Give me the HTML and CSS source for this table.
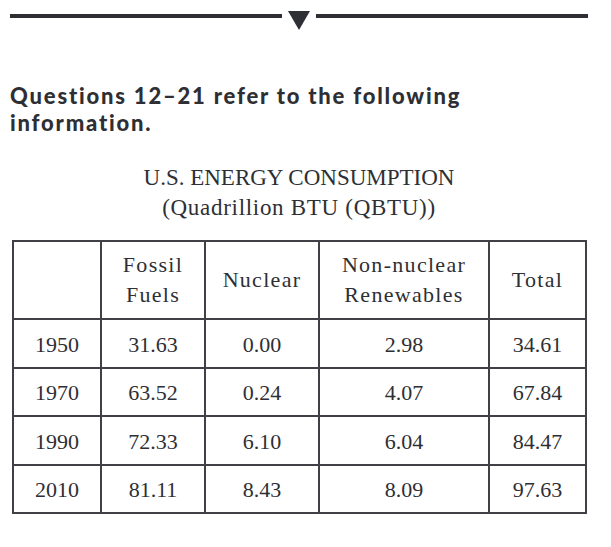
FILE: index.html
```html
<!DOCTYPE html>
<html lang="en">
<head>
<meta charset="utf-8">
<title>U.S. Energy Consumption</title>
<link rel="stylesheet" href="styles.css">
</head>
<body>
<div class="divider">
  <span class="rule"></span>
  <svg class="arrow" width="22" height="19" viewBox="0 0 22 19" aria-hidden="true"><polygon points="0,0 22,0 11,19" fill="#2e2f34"/></svg>
  <span class="rule"></span>
</div>
<h2 class="heading">Questions 12–21 refer to the following<br>information.</h2>
<div class="caption">
  <div class="caption-main">U.S. ENERGY CONSUMPTION</div>
  <div class="caption-sub">(Quadrillion BTU (QBTU))</div>
</div>
<table class="data">
  <colgroup>
    <col class="c-year"><col class="c-fossil"><col class="c-nuclear"><col class="c-renew"><col class="c-total">
  </colgroup>
  <thead>
    <tr>
      <th></th>
      <th>Fossil<br>Fuels</th>
      <th>Nuclear</th>
      <th>Non-nuclear<br>Renewables</th>
      <th>Total</th>
    </tr>
  </thead>
  <tbody>
    <tr><td>1950</td><td>31.63</td><td>0.00</td><td>2.98</td><td>34.61</td></tr>
    <tr><td>1970</td><td>63.52</td><td>0.24</td><td>4.07</td><td>67.84</td></tr>
    <tr><td>1990</td><td>72.33</td><td>6.10</td><td>6.04</td><td>84.47</td></tr>
    <tr><td>2010</td><td>81.11</td><td>8.43</td><td>8.09</td><td>97.63</td></tr>
  </tbody>
</table>
</body>
</html>
```
FILE: styles.css
```css
html, body {
  margin: 0;
  padding: 0;
  background: #ffffff;
  color: #2e2f34;
}

.divider {
  display: flex;
  align-items: flex-start;
  gap: 6px;
  width: 578px;
  margin: 11px 0 0 10px;
}

.rule {
  flex: 1;
  height: 4px;
  margin-top: 3px;
  background: #2e2f34;
}

.arrow {
  display: block;
  flex: none;
}

.heading {
  margin: 52px 0 0 10px;
  font-family: Lato, "Open Sans", sans-serif;
  font-weight: 900;
  font-size: 22px;
  line-height: 27px;
  letter-spacing: 1.8px;
  color: #2e2f34;
}

.caption {
  margin-top: 27px;
  text-align: center;
  width: 598px;
  font-family: "Liberation Serif", "Times New Roman", serif;
  font-size: 23px;
  line-height: 30px;
  color: #2e2f34;
}

.caption-sub {
  letter-spacing: 0.7px;
}

.data {
  margin: 17px 0 0 12px;
  border-collapse: collapse;
  width: 575px;
  table-layout: fixed;
  font-family: "Liberation Serif", "Times New Roman", serif;
  font-size: 22px;
  color: #2e2f34;
}

.c-year { width: 88px; }
.c-fossil { width: 104px; }
.c-nuclear { width: 114px; }
.c-renew { width: 170px; }
.c-total { width: 97px; }

.data th,
.data td {
  border: 2px solid #404146;
  text-align: center;
  vertical-align: middle;
  padding: 0;
}

.data th {
  font-weight: normal;
  height: 76px;
  line-height: 30px;
  letter-spacing: 1.3px;
}

.data td {
  height: 43.5px;
  padding-top: 3px;
}
```
